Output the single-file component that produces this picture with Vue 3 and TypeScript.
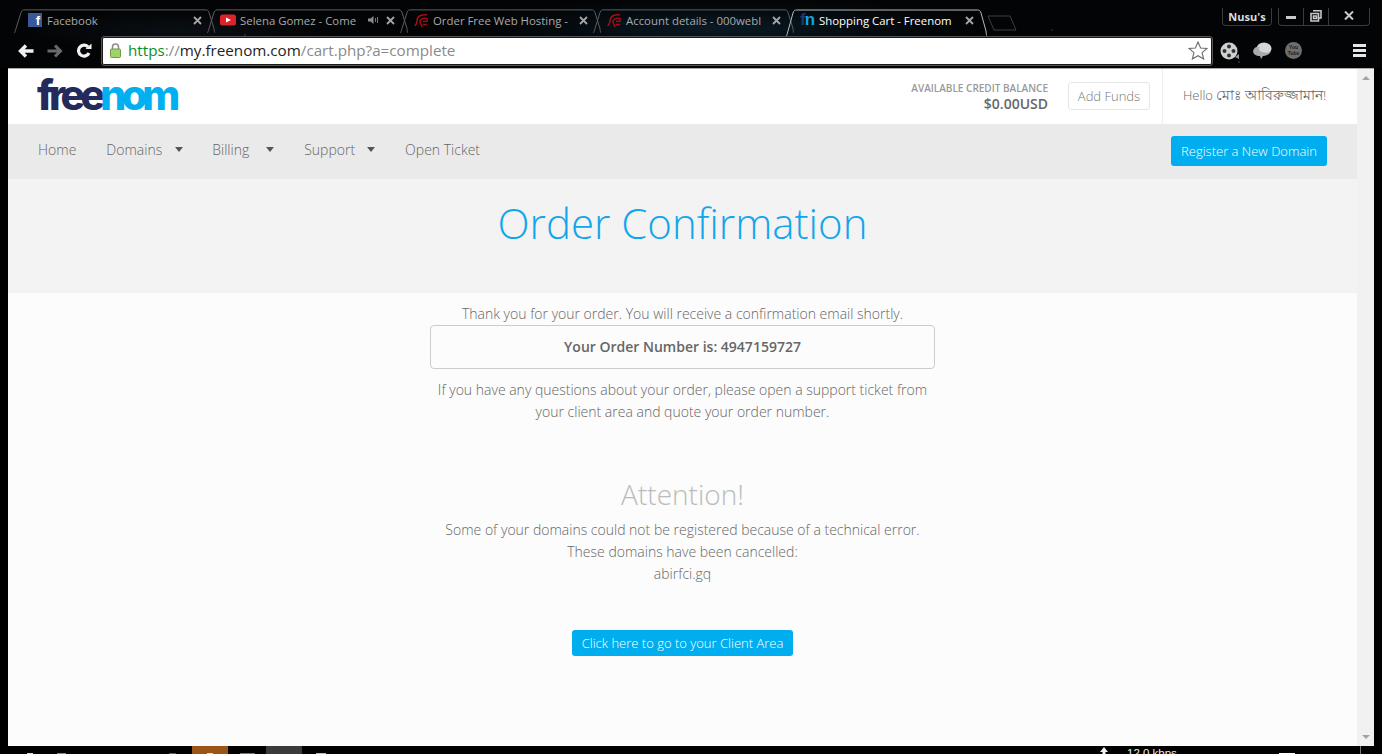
<script setup lang="ts">
interface Tab { title: string; icon: string; active?: boolean; audio?: boolean }
const tabs: Tab[] = [
  { title: 'Facebook', icon: 'fb' },
  { title: 'Selena Gomez - Come', icon: 'yt', audio: true },
  { title: 'Order Free Web Hosting -', icon: 'wh' },
  { title: 'Account details - 000webl', icon: 'wh' },
  { title: 'Shopping Cart - Freenom', icon: 'fn', active: true },
]
const nav = [
  { label: 'Home', caret: false },
  { label: 'Domains', caret: true },
  { label: 'Billing', caret: true },
  { label: 'Support', caret: true },
  { label: 'Open Ticket', caret: false },
]
</script>

<template>
  <div class="screen">
    <header class="chrome">
      <div class="titlebar">
        <div class="tabs">
          <div v-for="t in tabs" :key="t.title" class="tab" :class="{ active: t.active }">
            <svg class="tab-shape" viewBox="0 0 201 27" preserveAspectRatio="none">
              <path d="M0 27 C1 27 1 25 2 22 L7 4 C8 1 9 1 11 1 L191 1 C193 1 194 1 195 4 L200 22 C200 25 201 27 201 27" fill="none" :stroke="t.active ? '#b9b9b9' : '#5d5d5d'" stroke-width="1" vector-effect="non-scaling-stroke" />
            </svg>
            <span class="favicon">
              <span v-if="t.icon === 'fb'" class="fb">f</span>
              <svg v-else-if="t.icon === 'yt'" width="16" height="12" viewBox="0 0 16 12"><rect width="16" height="11" y=".5" rx="2.5" fill="#d9252a" /><path d="M6 3.5 L11 6 L6 8.5 Z" fill="#fff" /></svg>
              <svg v-else-if="t.icon === 'wh'" width="15" height="15" viewBox="0 0 15 15"><path d="M13 2 C8 1 3 3 3 8 C3 11 1 12 1 13 M14 6 C10 4 6 6 6 9 C6 11 8 12 8 14 M14 8 L9 8.500 M13 11 C11 12 10 12 9 11" fill="none" stroke="#a50d16" stroke-width="1.500" /></svg>
              <span v-else class="fn"><b>f</b><i>n</i></span>
            </span>
            <span class="tab-title">{{ t.title }}</span>
            <svg v-if="t.audio" class="audio" width="12" height="10" viewBox="0 0 12 10"><path d="M0 3.500 H2.500 L5.500 1 V9 L2.500 6.500 H0 Z" fill="#8c8c8c" /><path d="M7.500 3 V7 M9.500 2 V8" stroke="#777" stroke-width="1" /></svg>
            <svg class="close" width="9" height="9" viewBox="0 0 9 9"><path d="M1 1 L8 8 M8 1 L1 8" stroke="#a6a6a6" stroke-width="1.800" /></svg>
          </div>
          <svg class="new-tab" width="30" height="16" viewBox="0 0 30 16"><path d="M1 1 H23 L29 15 H7 Z" fill="none" stroke="#3f3f3f" /></svg>
        </div>
        <div class="user-chip">Nusu's</div>
        <div class="win-controls">
          <span class="wc wc-min"><i></i></span>
          <span class="wc wc-max">
            <svg width="12" height="12" viewBox="0 0 12 12"><path d="M3 0.800 H11 V8 H9 M1 3.500 H8.500 V11 H1 Z M3.500 6 H6.500 V8.500 H3.500 Z" fill="none" stroke="#c9c9c9" stroke-width="1.600" /></svg>
          </span>
          <span class="wc wc-close">
            <svg width="10" height="9" viewBox="0 0 10 9"><path d="M1 0.500 L9 8.500 M9 0.500 L1 8.500" stroke="#c9c9c9" stroke-width="2" /></svg>
          </span>
        </div>
      </div>
      <div class="toolbar">
        <svg class="tool" width="16" height="14" viewBox="0 0 16 14"><path d="M15.500 7 H4 M8 1.500 L2.500 7 L8 12.500" fill="none" stroke="#f1f1f1" stroke-width="3.400" /></svg>
        <svg class="tool" width="16" height="14" viewBox="0 0 16 14"><path d="M0.500 7 H12 M8 1.500 L13.500 7 L8 12.500" fill="none" stroke="#6a6a6a" stroke-width="3" /></svg>
        <svg class="tool" width="16" height="15" viewBox="0 0 16 15"><path d="M13 10 A5.500 5.500 0 1 1 12 3.800" fill="none" stroke="#f1f1f1" stroke-width="3.200" /><path d="M9.500 6 H15.500 V0.500 Z" fill="#f1f1f1" /></svg>
        <div class="omnibox">
          <svg class="lock" width="11" height="15" viewBox="0 0 11 15"><path d="M2.500 6 V4 A3 3 0 0 1 8.500 4 V6" fill="none" stroke="#8b8b8b" stroke-width="1.500" /><rect x=".5" y="6" width="10" height="8.500" rx="1" fill="#9fd36c" stroke="#6f9c42" /></svg>
          <span class="url"><span class="https">https</span><span class="path">://</span><span class="host">my.freenom.com</span><span class="path">/cart.php?a=complete</span></span>
          <svg class="star" width="20" height="19" viewBox="0 0 20 19"><path d="M10 1 L12.600 7 L19 7.500 L14.100 11.700 L15.600 18 L10 14.700 L4.400 18 L5.900 11.700 L1 7.500 L7.400 7 Z" fill="#fff" stroke="#6b6b6b" stroke-width="1.100" /></svg>
        </div>
        <div class="extensions">
          <svg width="20" height="20" viewBox="0 0 20 20"><circle cx="9" cy="10" r="8.500" fill="#d0d0d0" /><circle cx="9" cy="5.500" r="2" fill="#333" /><circle cx="9" cy="14.500" r="2" fill="#333" /><circle cx="4.500" cy="10" r="2" fill="#333" /><circle cx="13.500" cy="10" r="2" fill="#333" /><path d="M15 16 L19 13 V18 Z" fill="#999" /></svg>
          <svg width="20" height="18" viewBox="0 0 20 18"><ellipse cx="12" cy="6.500" rx="7.500" ry="6" fill="#d6d6d6" /><path d="M1 9 C2 5 5 4 8 5 C6 7 7 9 10 10 C14 11 17 11 19 9.500 C17 13 13 14 11 14 L9 17 L8 14 C4 14 1 12 1 9 Z" fill="#aaa" /></svg>
          <span class="yt-ext">You<br />Tube</span>
        </div>
        <div class="menu"><i></i><i></i><i></i></div>
      </div>
    </header>

    <div class="window">
      <main class="page">
        <div class="top-row">
          <div class="logo"><span class="free">free</span><span class="nom">nom</span></div>
          <div class="credit">
            <div class="credit-label">AVAILABLE CREDIT BALANCE</div>
            <div class="credit-value">$0.00USD</div>
          </div>
          <a class="add-funds">Add Funds</a>
          <div class="hello">Hello <span class="bn">মোঃ আবিরুজ্জামান!</span></div>
        </div>
        <nav class="nav">
          <a v-for="n in nav" :key="n.label" class="nav-item">{{ n.label }}<i v-if="n.caret" class="caret"></i></a>
          <a class="btn register">Register a New Domain</a>
        </nav>
        <div class="hero"><h1>Order Confirmation</h1></div>
        <section class="content">
          <p class="line">Thank you for your order. You will receive a confirmation email shortly.</p>
          <div class="order-box">Your Order Number is: 4947159727</div>
          <p class="line">If you have any questions about your order, please open a support ticket from</p>
          <p class="line">your client area and quote your order number.</p>
          <h2>Attention!</h2>
          <p class="line">Some of your domains could not be registered because of a technical error.</p>
          <p class="line">These domains have been cancelled:</p>
          <p class="line">abirfci.gq</p>
          <a class="btn client">Click here to go to your Client Area</a>
        </section>
      </main>
      <aside class="scrollbar">
        <i class="arrow up"></i>
        <i class="arrow down"></i>
      </aside>
    </div>

    <footer class="taskbar">
      <i class="tb t1"></i>
      <i class="tb t2"></i>
      <i class="tb t3"></i>
      <span class="tb-block orange"><i></i></span>
      <i class="tb t4"></i>
      <span class="tb-block gray"></span>
      <i class="tb t5"></i>
      <svg class="tb-arrow" width="12" height="8" viewBox="0 0 12 8"><path d="M6 1 L10 6 H7.500 V8 H4.500 V6 H2 Z" fill="#f2f2f2" /></svg>
      <span class="tb-rate">12.0 kbps</span>
      <i class="tb t6"></i>
      <i class="tb t7"></i>
    </footer>
  </div>
</template>

<style scoped>
.screen {
  width: 1382px;
  height: 754px;
  display: flex;
  flex-direction: column;
  overflow: hidden;
  background: #000;
  font-family: "Open Sans", "Noto Sans", sans-serif;
}
.chrome {
  height: 68px;
  flex: none;
  display: flex;
  flex-direction: column;
  background:
    radial-gradient(circle at 730px 48px, rgba(120,160,150,.6) 0, transparent 1px),
    radial-gradient(circle at 245px 35px, rgba(140,170,150,.7) 0, transparent 1px),
    radial-gradient(circle at 1239px 62px, rgba(120,180,140,.8) 0, transparent 1px),
    radial-gradient(circle at 1052px 30px, rgba(150,150,150,.6) 0, transparent 1px),
    radial-gradient(ellipse 260px 30px at 720px 28px, #0a1a25 0, rgba(5,15,22,.6) 60%, transparent 100%),
    radial-gradient(ellipse 160px 20px at 180px 30px, #0a0f14 0, transparent 100%),
    #030405;
}
.titlebar {
  height: 36px;
  flex: none;
  display: flex;
  align-items: flex-start;
}
.tabs {
  display: flex;
  margin: 9px 0 0 14px;
  flex: 1;
  align-items: flex-start;
}
.tab {
  position: relative;
  width: 193px;
  height: 24px;
  display: flex;
  align-items: center;
  padding: 0 5px 2px 13px;
  box-sizing: border-box;
  color: #a9a9a9;
  font-size: 11.400px;
}
.tab.active { color: #fff; height: 27px; padding-bottom: 5px; }
.tab-shape {
  position: absolute;
  left: 0;
  top: 0;
  width: 201px;
  height: 100%;
  pointer-events: none;
}
.favicon {
  width: 16px;
  height: 16px;
  flex: none;
  margin-right: 4px;
  display: flex;
  align-items: center;
  justify-content: center;
}
.fb {
  width: 14px;
  height: 14px;
  background: #3b5998;
  color: #fff;
  font: bold 13px/15px "Liberation Sans", sans-serif;
  text-align: right;
  padding-right: 2px;
  box-sizing: border-box;
}
.fn {
  font: bold 17px/16px "Liberation Sans", sans-serif;
  letter-spacing: -1px;
}
.fn b { color: #1c3a6e; }
.fn i { color: #12a3e6; font-style: normal; }
.tab-title {
  flex: 1;
  white-space: nowrap;
}
.audio { flex: none; margin-right: 6px; }
.close { flex: none; }
.new-tab { margin: 6px 0 0 8px; }
.user-chip {
  margin: 8px 6px 0 0;
  width: 50px;
  height: 18px;
  box-sizing: border-box;
  border: 1px solid #3a3a3a;
  border-top: 0;
  border-radius: 0 0 4px 4px;
  color: #ddd;
  font: bold 11px/17px "Open Sans", sans-serif;
  text-align: center;
}
.win-controls {
  margin: 8px 12px 0 0;
  width: 92px;
  height: 18px;
  box-sizing: border-box;
  display: flex;
  border: 1px solid #3a3a3a;
  border-top: 0;
  border-radius: 0 0 4px 4px;
}
.wc {
  display: flex;
  align-items: center;
  justify-content: center;
  height: 100%;
  padding-bottom: 2px;
  box-sizing: border-box;
  border-right: 1px solid #3a3a3a;
}
.wc-min { width: 25px; }
.wc-min i { width: 10px; height: 3px; background: #c9c9c9; margin-top: 4px; }
.wc-max { width: 25px; }
.wc-close { flex: 1; border-right: 0; }
.toolbar {
  height: 32px;
  flex: none;
  display: flex;
  align-items: center;
  padding: 0 16px 3px 18px;
  box-sizing: border-box;
}
.tool { flex: none; margin-right: 13px; }
.omnibox {
  margin-left: -3px;
  width: 1110px;
  height: 28px;
  flex: none;
  background: #fff;
  border: 1px solid #1a1a1a;
  outline: 1px solid #555;
  outline-offset: 0;
  border-radius: 2px;
  display: flex;
  align-items: center;
  box-sizing: border-box;
  padding: 0 3px 0 7px;
}
.lock { flex: none; }
.url {
  flex: 1;
  margin-left: 7px;
  margin-bottom: 2px;
  font: 15.200px "Open Sans", sans-serif;
  white-space: nowrap;
}
.https { color: #0a8f1f; }
.host { color: #222; }
.path { color: #8a8a8a; }
.star { flex: none; }
.extensions {
  margin-left: 8px;
  display: flex;
  align-items: center;
  gap: 12px;
  flex: 1;
}
.yt-ext {
  width: 17px;
  height: 17px;
  margin-left: 1px;
  border-radius: 50%;
  background: #6e6e6e;
  color: #1c1c1c;
  font: bold 5px/5.500px "Liberation Sans", sans-serif;
  text-align: center;
  padding-top: 3px;
  box-sizing: border-box;
}
.menu {
  width: 13px;
  display: flex;
  flex-direction: column;
  gap: 2px;
}
.menu i { height: 3px; background: #e6e6e6; }
.window {
  flex: 1;
  min-height: 0;
  display: flex;
  padding: 0 8px;
}
.page {
  flex: 1;
  min-width: 0;
  display: flex;
  flex-direction: column;
  background: #fcfcfc;
  border-top: 1px solid #aaa;
}
.top-row {
  height: 55px;
  flex: none;
  display: flex;
  align-items: center;
  background: #fff;
  padding-left: 29px;
}
.logo {
  flex: 1;
  font: 800 41px/44px "Inter", "Liberation Sans", sans-serif;
  letter-spacing: -4.700px;
  margin-top: -3px;
}
.free { color: #232a5c; }
.nom { color: #00b0f0; }
.credit { text-align: right; margin-right: 20px; margin-top: 2px; }
.credit-label {
  font-size: 10px;
  line-height: 13px;
  font-weight: 600;
  color: #999;
}
.credit-value {
  font-size: 14px;
  line-height: 18px;
  font-weight: 600;
  color: #666;
}
.add-funds {
  width: 82px;
  height: 28px;
  box-sizing: border-box;
  border: 1px solid #e6e6e6;
  border-radius: 3px;
  font-size: 13px;
  font-weight: 300;
  line-height: 26px;
  text-align: center;
  color: #777;
  margin-right: 12px;
  margin-bottom: 2px;
}
.hello {
  width: 195px;
  height: 100%;
  box-sizing: border-box;
  border-left: 1px solid #eee;
  padding-left: 20px;
  font-size: 13px;
  font-weight: 300;
  line-height: 53px;
  color: #666;
  white-space: nowrap;
}
.bn { font-size: 13.500px; }
.nav {
  height: 55px;
  flex: none;
  background: #eaeaea;
  display: flex;
  align-items: center;
  padding: 0 30px;
  box-sizing: border-box;
}
.nav-item {
  font-size: 14px;
  font-weight: 300;
  color: #666;
  margin-right: 30px;
  display: flex;
  align-items: center;
  padding-bottom: 5px;
}
.nav-item:nth-child(2) { margin-right: 29px; }
.nav-item:nth-child(3) .caret { margin-left: 17px; }
.nav-item:nth-child(4) .caret { margin-left: 12px; }
.caret {
  width: 0;
  height: 0;
  margin-left: 13px;
  border-left: 4px solid transparent;
  border-right: 4px solid transparent;
  border-top: 5px solid #555;
}
.btn {
  background: #00aeef;
  color: #fff;
  font-size: 13px;
  font-weight: 300;
  border-radius: 3px;
  text-align: center;
  box-sizing: border-box;
}
.register {
  margin-left: auto;
  width: 156px;
  height: 30px;
  line-height: 30px;
  margin-bottom: 1px;
}
.hero {
  height: 114px;
  flex: none;
  background: #f3f3f3;
}
h1 {
  margin: 0;
  font-size: 42px;
  font-weight: 300;
  line-height: 54px;
  padding-top: 17px;
  text-align: center;
  color: #12a5ec;
}
.content {
  flex: 1;
  display: flex;
  flex-direction: column;
  align-items: center;
  padding-top: 10px;
}
.line {
  margin: 0;
  font-size: 14px;
  font-weight: 300;
  line-height: 22px;
  color: #666;
  white-space: nowrap;
}
.order-box {
  width: 505px;
  height: 44px;
  box-sizing: border-box;
  border: 1px solid #ccc;
  border-radius: 4px;
  margin-bottom: 10px;
  font-size: 14px;
  font-weight: 600;
  line-height: 42px;
  text-align: center;
  color: #666;
}
h2 {
  margin: 52px 0 0;
  font-size: 28px;
  font-weight: 300;
  line-height: 38px;
  height: 44px;
  color: #bbb;
}
.client {
  margin-top: 45px;
  width: 221px;
  height: 26px;
  line-height: 26px;
}
.scrollbar {
  width: 17px;
  flex: none;
  background: #f1f1f1;
  border-top: 1px solid #aaa;
  display: flex;
  flex-direction: column;
  justify-content: space-between;
  align-items: center;
  padding: 7px 0 7px;
  box-sizing: border-box;
}
.arrow {
  width: 0;
  height: 0;
  border-left: 4px solid transparent;
  border-right: 4px solid transparent;
}
.arrow.up { border-bottom: 4px solid #a3a3a3; }
.arrow.down { border-top: 4px solid #a3a3a3; }
.taskbar {
  height: 8px;
  flex: none;
  display: flex;
  align-items: flex-end;
  overflow: hidden;
  color: #eee;
  font-family: "Liberation Sans", sans-serif;
}
.tb {
  flex: none;
  height: 1px;
}
.t1 { margin-left: 27px; width: 6px; background: #ddd; }
.t2 { margin-left: 24px; width: 9px; background: #888; }
.t3 { margin-left: 103px; width: 7px; background: #1272b8; }
.t4 { margin-left: 12px; width: 15px; background: #8d6a5c; }
.t5 { margin-left: 14px; width: 10px; background: #bbb; }
.t6 { margin-left: 96px; width: 16px; background: #fff; }
.t7 { margin-left: 65px; width: 1px; height: 8px; background: #777; }
.tb-block {
  flex: none;
  width: 36px;
  height: 8px;
  display: flex;
  align-items: flex-end;
  justify-content: center;
}
.tb-block.orange { margin-left: 16px; background: #9c5518; }
.tb-block.orange i { width: 6px; height: 1px; background: #e9d8c8; }
.tb-block.gray { margin-left: 11px; background: #3a3a3a; }
.tb-arrow { flex: none; margin-left: 772px; }
.tb-rate {
  flex: none;
  margin-left: 17px;
  width: 56px;
  height: 8px;
  font-size: 11.500px;
  line-height: 14px;
  white-space: nowrap;
}
</style>
